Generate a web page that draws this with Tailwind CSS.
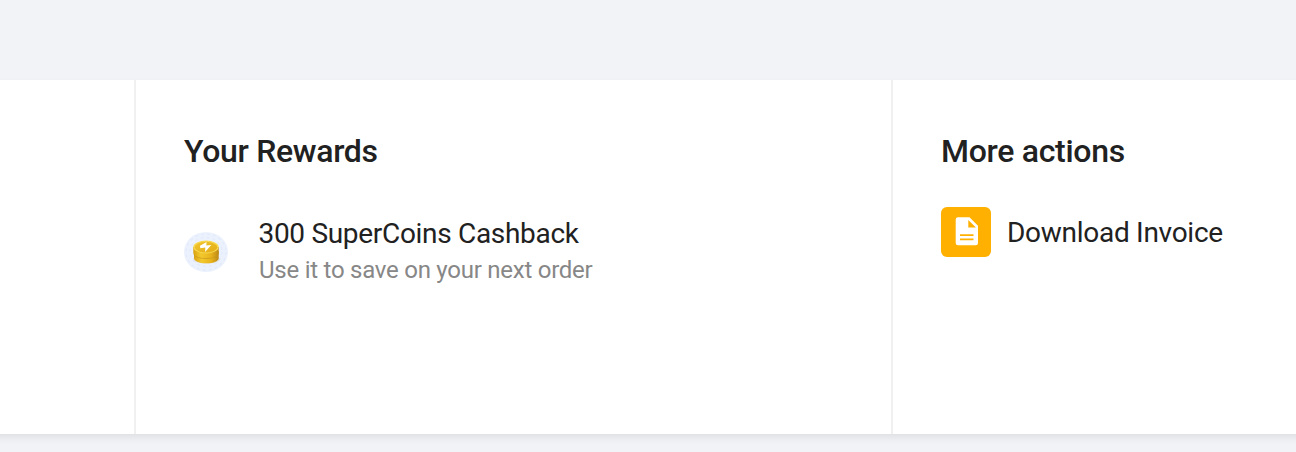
<!DOCTYPE html>
<html lang="en"><head><meta charset="utf-8"><title>Order rewards</title>
<script src="https://cdn.jsdelivr.net/npm/@tailwindcss/browser@4"></script></head>
<body class="h-[452px] overflow-hidden bg-[#f1f3f6] pt-20 font-['Roboto',sans-serif] text-[#212121]">
<main class="-mx-4 flex h-[354px] bg-white shadow-[0_4px_8px_-1px_rgba(0,0,0,0.09)]">
<div class="w-[150px] shrink-0"></div>
<section class="w-[757px] shrink-0 border-l-2 border-[#f0f0f0] pl-12 pt-[50px]">
<h2 class="text-[32px] leading-[42px] font-medium tracking-[-0.32px] whitespace-nowrap">Your Rewards</h2>
<div class="mt-10 flex">
<svg class="mt-[18px] h-11 w-11" viewBox="0 0 44 44" aria-hidden="true">
<defs><linearGradient id="side"><stop stop-color="#d9a111"/><stop offset=".3" stop-color="#f3c92e"/><stop offset=".7" stop-color="#e8b31c"/><stop offset="1" stop-color="#bd8917"/></linearGradient>
<linearGradient id="face" x2="1" y2="1"><stop stop-color="#f0c42e"/><stop offset="1" stop-color="#e3ad16"/></linearGradient></defs>
<ellipse cx="22" cy="22" rx="22" ry="20" fill="#ecf2fd"/>
<g fill="none" stroke="#e2eafb" stroke-width="1.3" stroke-dasharray="3 3"><ellipse cx="22" cy="22" rx="20" ry="18"/><ellipse cx="22" cy="22" rx="16" ry="14.5"/></g>
<ellipse cx="22.5" cy="29" rx="13" ry="4.5" fill="#ddd9c9"/>
<path d="M10 21v7c0 3 5.300 5.300 12.500 5.300S34.700 31 34.700 28v-7Z" fill="url(#side)"/>
<path d="M9.300 17v6c0 3 5.500 5.300 12.700 5.300S34.700 26 34.700 23v-6Z" fill="url(#side)"/>
<path d="M10 24.500c1.500 2.800 6 4 12 4s10.500-1.200 12.500-4" fill="none" stroke="#c3921b" stroke-width=".6"/>
<ellipse cx="22" cy="17" rx="12.700" ry="6.500" fill="#f8d850"/>
<ellipse cx="22" cy="17.200" rx="11.300" ry="5.400" fill="url(#face)"/>
<path d="m16 15.700 6.500-3.700-.2 3.600 5-.7-6.200 7 .2-4.400-5 .8Z" fill="#fff"/>
</svg>
<div class="ml-[31px]"><p class="-ml-px pl-[0.5px] pt-px text-[28px] leading-[41px] tracking-[-0.31px] whitespace-nowrap">300 SuperCoins Cashback</p><p class="text-2xl leading-8 tracking-[-0.25px] whitespace-nowrap text-[#878787]">Use it to save on your next order</p></div>
</div></section>
<section class="flex-1 border-l-2 border-[#f0f0f0] pl-12 pt-[50px]">
<h2 class="text-[32px] leading-[42px] font-medium tracking-[-0.3px] whitespace-nowrap">More actions</h2>
<div class="mt-[35px] flex items-center gap-4"><svg class="h-[50px] w-[50px] rounded-md bg-[#ffb000]" viewBox="0 0 50 50" aria-hidden="true"><path fill="#fff" fill-rule="evenodd" d="M17 10.200h11.500l8.500 8.500V36a2.300 2.300 0 0 1-2.300 2.300H17a2.300 2.300 0 0 1-2.300-2.300V12.500a2.300 2.300 0 0 1 2.300-2.300ZM27.300 13v7.600h7.600ZM19 27.200v1.800h13.500v-1.800ZM19 31.500v1.800h13.500v-1.800Z"/></svg><p class="pt-0.5 text-[28px] leading-[42px] tracking-[-0.28px] whitespace-nowrap">Download Invoice</p></div>
</section></main></body></html>
